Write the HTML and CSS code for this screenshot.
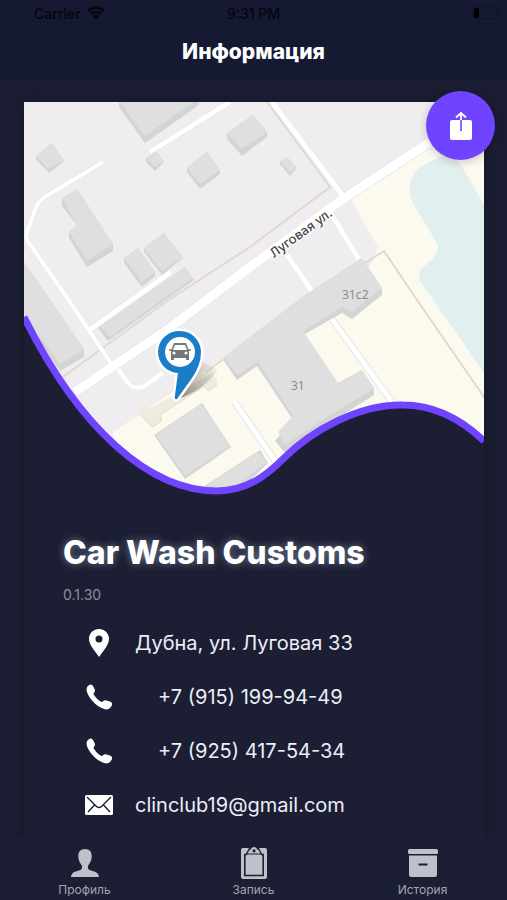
FILE: index.html
```html
<!DOCTYPE html>
<html lang="ru">
<head>
    <meta charset="UTF-8">
    <meta name="viewport" content="width=device-width, initial-scale=1.0">
    <title>Информация</title>
    <link rel="stylesheet" href="styles.css">
</head>
<body>
    <header class="header">
        <div class="status-bar">
            <div class="carrier">
                <span>Carrier</span>
                <svg width="18" height="14" viewBox="0 0 18 14">
                    <path d="M1 5Q9-2 17 5M4 8Q9 3.500 14 8" fill="none" stroke="#05060d" stroke-width="2.400"/>
                    <path d="M9 13.500L5.800 10.300Q9 7.800 12.200 10.300Z" fill="#05060d"/>
                </svg>
            </div>
            <div class="time">9:31 PM</div>
            <div class="battery">
                <svg width="30" height="14" viewBox="0 0 30 14">
                    <rect x="1" y="1" width="24" height="12" rx="3" fill="none" stroke="#101226"/>
                    <rect x="2" y="2" width="5" height="10" rx="2"/>
                    <path d="M27 5v4q2-2 0-4" fill="#101226"/>
                </svg>
            </div>
        </div>
        <h1 class="title">Информация</h1>
    </header>

    <main class="card">
        <button type="button" class="share-btn" aria-label="Поделиться">
            <svg width="24" height="30" viewBox="0 0 24 30">
                <rect x="1" y="9" width="22" height="20" rx="2" fill="#fff"/>
                <path d="M9.500 9V8H14.500V9" fill="#7044ff"/>
                <path d="M12 9V20" stroke="#7044ff" stroke-width="1.600"/>
                <path d="M12 2V9" stroke="#fff" stroke-width="1.800"/>
                <path d="M7 6.500L12 2L17 6.500" fill="none" stroke="#fff" stroke-width="2"/>
            </svg>
        </button>

        <svg class="map" viewBox="24 102 460 394">
            <defs>
                <clipPath id="wave">
                    <path d="M24 102H484V441C462 420 435 405 403 405C360 404 312 430 283 459C266 476 246 491 217 491C150 491 80 430 24 317Z"/>
                </clipPath>
                <linearGradient id="pinShadow" x1="0" y1="1" x2="1" y2="0">
                    <stop offset="0" stop-color="#6e6a5c" stop-opacity=".8"/>
                    <stop offset="1" stop-color="#8e8a7c" stop-opacity="0"/>
                </linearGradient>
            </defs>
            <g clip-path="url(#wave)">
                <rect x="24" y="102" width="460" height="400" fill="#efedf0"/>
                <!-- ground and water -->
                <path d="M484 115L437 144L351 200L378 247L360 290L225 357L113 432L120 500H484Z" fill="#fcfaee"/>
                <path d="M450 156Q442 155 433 160L418 169Q408 178 410 195Q411 200 415 207L437 243Q439 247 437 251L433 259L422 268Q417 273 420 281L484 373V205L464 170Q457 157 450 156Z" fill="#e2efef"/>
                <!-- footpaths -->
                <g fill="none" stroke="#dedace" stroke-width="2">
                    <path d="M267 102L330 187L250 247L170 299L63 377"/>
                    <path d="M365 263L384 251L417 300L484 397"/>
                    <path d="M206 372L224 359"/>
                </g>
                <!-- roads -->
                <g fill="none" stroke="#e6e4e7" stroke-linejoin="round">
                    <path d="M103 162L43 198Q38 202 35 210L27 232Q25 238 29 243L68 299L114 368" stroke-width="5"/>
                    <path d="M150 152L230 102M272 102L343 196M330 212L359 259M287 255L314 294M88 331L171 272" stroke-width="6"/>
                    <path d="M332 319L392 402M234 401L280 468" stroke-width="7"/>
                    <path d="M470 115L430 142L343 199L250 267L167 330L75 392" stroke-width="10"/>
                </g>
                <g fill="none" stroke="#fff" stroke-linejoin="round">
                    <path d="M103 162L43 198Q38 202 35 210L27 232Q25 238 29 243L68 299L114 368" stroke-width="4"/>
                    <path d="M150 152L230 102M272 102L343 196M330 212L359 259M287 255L314 294M88 331L171 272" stroke-width="5"/>
                    <path d="M118 369L128 383Q132 389 143 387L163 373" stroke-width="4"/>
                    <path d="M332 319L392 402M234 401L280 468" stroke-width="5"/>
                    <path d="M470 115L430 142L343 199L250 267L167 330L75 392" stroke-width="9"/>
                </g>
                <!-- building sides -->
                <g fill="#d3d4d4">
                    <path d="M119 102H199V105L145 143L119 107Z"/>
                    <path d="M36 156L52 143L64 161L49 173L36 160Z"/>
                    <path d="M62 198L77 189L113 244V251L87 267L69 238V232L77 225L62 206Z"/>
                    <path d="M146 158L156 151L164 162L155 171L146 162Z"/>
                    <path d="M187 168L207 152L220 170V174L200 189L187 172Z"/>
                    <path d="M227 133L253 115L267 132V137L242 156L227 139Z"/>
                    <path d="M280 161L287 157L297 168L290 176L280 164Z"/>
                    <path d="M124 258L138 248L155 272V276L142 287L124 263Z"/>
                    <path d="M144 248L164 233L183 258L162 275L144 252Z"/>
                    <path d="M98 328L185 267L194 280L108 341Z"/>
                    <path d="M24 262L84 349V357L60 371L24 320Z"/>
                    <path d="M224 357L305 295L362 258L382 288V295L352 319L342 313L303 335L338 383L362 370L374 388V395L330 423L285 453L275 441L293 420L257 366L237 380L224 361Z"/>
                    <path d="M154 435L202 403L231 447L185 479Z"/>
                    <path d="M203 487L260 450L268 463L230 500Z"/>
                </g>
                <!-- roofs -->
                <g fill="#dfdfe0">
                    <path d="M120 102H193L145 136Z"/>
                    <path d="M36 156L52 143L64 160L48 169Z"/>
                    <path d="M62 198L77 189L113 244L87 261L69 232L77 225Z"/>
                    <path d="M146 158L156 151L164 161L155 167Z"/>
                    <path d="M187 168L207 152L220 170L200 184Z"/>
                    <path d="M227 133L253 115L267 132L242 149Z"/>
                    <path d="M280 161L287 157L297 168L290 172Z"/>
                    <path d="M124 258L138 248L155 272L142 282Z"/>
                    <path d="M144 248L164 233L183 257L162 271Z"/>
                    <path d="M100 326L185 267L193 278L110 337Z"/>
                    <path d="M24 262L84 349L60 364L24 315Z"/>
                    <path d="M224 357L305 295L362 258L382 288L352 312L342 307L303 331L338 383L362 370L374 389L330 415L285 445L278 432L293 416L258 362L237 375Z"/>
                    <path d="M156 435L201 404L230 446L185 476Z"/>
                    <path d="M207 485L258 452L267 462L230 490Z"/>
                </g>
                <path d="M138 412L144 407L149 409L176 394L212 373L217 380V385L208 391L205 386L161 414L162 421L153 428Z" fill="#f0ebdf"/>
                <path d="M139 413L152 427L161 421L161 414L205 386L208 391L217 385" fill="none" stroke="#e0dacb"/>
                <text class="street" transform="translate(274 258) rotate(-36)">Луговая ул.</text>
                <text class="house" x="342" y="299">31с2</text>
                <text class="house" x="291" y="390">31</text>
                <!-- car wash pin -->
                <path d="M178 399L200 360L218 370Q204 390 178 399Z" fill="url(#pinShadow)"/>
                <path d="M180 331A21 21 0 0 1 201 352Q201 365 192 378L177 399Q174 400 175 395L178 373A21 21 0 0 1 180 331Z" fill="#1b7cc8" stroke="#fff" stroke-width="5" stroke-linejoin="round" paint-order="stroke"/>
                <circle cx="180" cy="352" r="15" fill="#fff"/>
                <g transform="translate(169 343)">
                    <path d="M5 0H17L20 8V15H2V8Z" fill="#777"/>
                    <path d="M6 2H16L18 7H4Z" fill="#fff"/>
                    <path d="M0 7H3M19 7H22" stroke="#777" stroke-width="1.500"/>
                    <rect x="2" y="13" width="3" height="4" fill="#777"/>
                    <rect x="17" y="13" width="3" height="4" fill="#777"/>
                    <circle cx="5" cy="10" r="1.500" fill="#fff"/>
                    <circle cx="17" cy="10" r="1.500" fill="#fff"/>
                </g>
            </g>
            <path d="M24 317C80 430 150 491 217 491C246 491 266 476 283 459C312 430 360 404 403 405C435 405 462 420 484 441" fill="none" stroke="#7044ff" stroke-width="7"/>
        </svg>

        <section class="info">
            <h2 class="name">Car Wash Customs</h2>
            <div class="version">0.1.30</div>
            <ul class="contacts">
                <li class="contact">
                    <svg width="28" height="28" viewBox="0 0 28 28">
                        <path d="M14 0C8.500 0 4 4.300 4 9.700C4 16 10 22 14 28C18 22 24 16 24 9.700C24 4.300 19.500 0 14 0ZM14 6.500A3.500 3.500 0 1 1 14 13.500A3.500 3.500 0 1 1 14 6.500Z" fill="#fff" fill-rule="evenodd"/>
                    </svg>
                    <span>Дубна, ул. Луговая 33</span>
                </li>
                <li class="contact phone">
                    <svg width="28" height="28" viewBox="0 0 28 28">
                        <path d="M3.500 2.500Q6.500 .3 8.300 3.500L9.800 6.500Q10.600 8.500 9 9.700Q8 10.600 9 12Q11.500 16 15.500 18.600Q17 19.500 18 18.300Q19.300 17 21.500 17.500L25 18.500Q28 19.500 26.800 22.500Q24.500 27 20 26.300Q13 24.500 7 17.500Q2.500 12 1.700 8Q1 4.500 3.500 2.500Z" fill="#fff"/>
                    </svg>
                    <a href="tel:+79151999449">+7 (915) 199-94-49</a>
                </li>
                <li class="contact phone">
                    <svg width="28" height="28" viewBox="0 0 28 28">
                        <path d="M3.500 2.500Q6.500 .3 8.300 3.500L9.800 6.500Q10.600 8.500 9 9.700Q8 10.600 9 12Q11.500 16 15.500 18.600Q17 19.500 18 18.300Q19.300 17 21.500 17.500L25 18.500Q28 19.500 26.800 22.500Q24.500 27 20 26.300Q13 24.500 7 17.500Q2.500 12 1.700 8Q1 4.500 3.500 2.500Z" fill="#fff"/>
                    </svg>
                    <a href="tel:+79254175434">+7 (925) 417-54-34</a>
                </li>
                <li class="contact">
                    <svg width="28" height="28" viewBox="0 0 28 28">
                        <rect x="0" y="4" width="28" height="20" rx="1.500" fill="#fff"/>
                        <path d="M2 6L11.500 15.500Q14 17.500 16.500 15.500L26 6M3 21L9.500 14M25 21L18.500 14" fill="none" stroke="#1c1e33" stroke-width="1.400"/>
                    </svg>
                    <a href="mailto:clinclub19@gmail.com">clinclub19@gmail.com</a>
                </li>
            </ul>
        </section>
    </main>

    <nav class="tabs">
        <a class="tab" href="#profile">
            <svg width="32" height="34" viewBox="0 0 32 34">
                <path d="M16 3C11.500 3 9 6 9.300 10.500C9.500 14 10.500 16.500 12.500 19C13.500 21 13.300 23 11.500 24C7.500 25.500 2.500 25.500 2 31H30C29.500 25.500 24.500 25.500 20.500 24C18.700 23 18.500 21 19.500 19C21.500 16.500 22.500 14 22.700 10.500C23 6 20.500 3 16 3Z" fill="#bfc1ca"/>
            </svg>
            <span>Профиль</span>
        </a>
        <a class="tab" href="#booking">
            <svg width="32" height="34" viewBox="0 0 32 34">
                <rect x="3" y="2" width="26" height="31" rx="2" fill="#bfc1ca"/>
                <path d="M9 8.500H6.800V29.500H25.200V8.500H23" fill="none" stroke="#1c1e33" stroke-width="1.600"/>
                <path d="M11.500 1H20.500L24.500 8.500H7.500Z" fill="#1c1e33"/>
                <path d="M9.500 7.500L11.500 4Q13 3.700 13.300 2.500Q14 1 16 1Q18 1 18.700 2.500Q19 3.700 20.500 4L22.500 7.500Z" fill="#bfc1ca"/>
                <circle cx="16" cy="4.800" r="1.600" fill="#1c1e33"/>
            </svg>
            <span>Запись</span>
        </a>
        <a class="tab" href="#history">
            <svg width="32" height="34" viewBox="0 0 32 34">
                <rect x="1" y="3" width="30" height="5" rx="1.500" fill="#bfc1ca"/>
                <path d="M2 9.500H30V28.500Q30 31 27.500 31H4.500Q2 31 2 28.500Z" fill="#bfc1ca"/>
                <path d="M11.500 18.500H20.500" stroke="#1c1e33" stroke-width="2"/>
            </svg>
            <span>История</span>
        </a>
    </nav>
</body>
</html>
```
FILE: styles.css
```css
* {
    box-sizing: border-box;
}
body {
    background: #1c1e33;
    color: #fff;
    margin: 0;
    min-height: 100vh;
    display: flex;
    flex-direction: column;
    font-family: Inter, "Liberation Sans", sans-serif;
}
a {
    color: inherit;
    text-decoration: none;
}
.header {
    background: #161932;
    height: 80px;
    margin-bottom: 22px;
}
.status-bar {
    display: grid;
    grid-template-columns: 1fr auto 1fr;
    align-items: center;
    height: 26px;
    padding: 0 5px 0 34px;
    color: #05060d;
    font-size: 14px;
    font-weight: 500;
}
.carrier {
    display: flex;
    align-items: center;
    gap: 6px;
}
.time {
    padding-right: 29px;
}
.battery {
    display: flex;
    justify-content: flex-end;
}
.title {
    margin: 12px 0 0;
    font-size: 21px;
    line-height: 28px;
    font-weight: 800;
    text-align: center;
}
.card {
    position: relative;
    flex: 1;
    margin: 0 23px 0 24px;
    box-shadow: 0 0 14px rgba(16, 22, 36, 0.7);
}
.map {
    display: block;
    width: 100%;
}
.street {
    font-family: "Noto Sans", sans-serif;
    font-size: 13px;
    font-weight: 500;
    fill: #444;
    stroke: #fff;
    stroke-width: 2px;
    paint-order: stroke;
}
.house {
    font-family: "Noto Sans", sans-serif;
    font-size: 12px;
    fill: #8a8a8a;
}
.share-btn {
    position: absolute;
    top: -11px;
    right: -11px;
    width: 69px;
    height: 69px;
    padding: 0;
    border: none;
    border-radius: 50%;
    background: #7044ff;
    box-shadow: 0 2px 10px rgba(0, 0, 0, 0.2);
    display: flex;
    align-items: center;
    justify-content: center;
    cursor: pointer;
}
.info {
    padding: 37px 39px 0;
}
.name {
    margin: 0;
    font-size: 32px;
    line-height: 40px;
    font-weight: 800;
    text-shadow: 0 0 8px rgba(190, 215, 240, 0.5);
}
.version {
    margin: 12px 0 11px;
    font-size: 14px;
    line-height: 20px;
    color: #8c8e9b;
}
.contacts {
    list-style: none;
    margin: 0;
    padding: 0 0 0 22px;
}
.contact {
    display: flex;
    align-items: center;
    gap: 22px;
    height: 54px;
    font-size: 20px;
    color: #eceef8;
}
.phone {
    gap: 45px;
}
.tabs {
    position: sticky;
    bottom: 0;
    display: flex;
    height: 62px;
    padding-top: 8px;
    background: #1c1e33;
}
.tab {
    flex: 1;
    display: flex;
    flex-direction: column;
    align-items: center;
    gap: 2px;
    font-size: 12px;
    line-height: 16px;
    color: #a3a5b1;
}
```
